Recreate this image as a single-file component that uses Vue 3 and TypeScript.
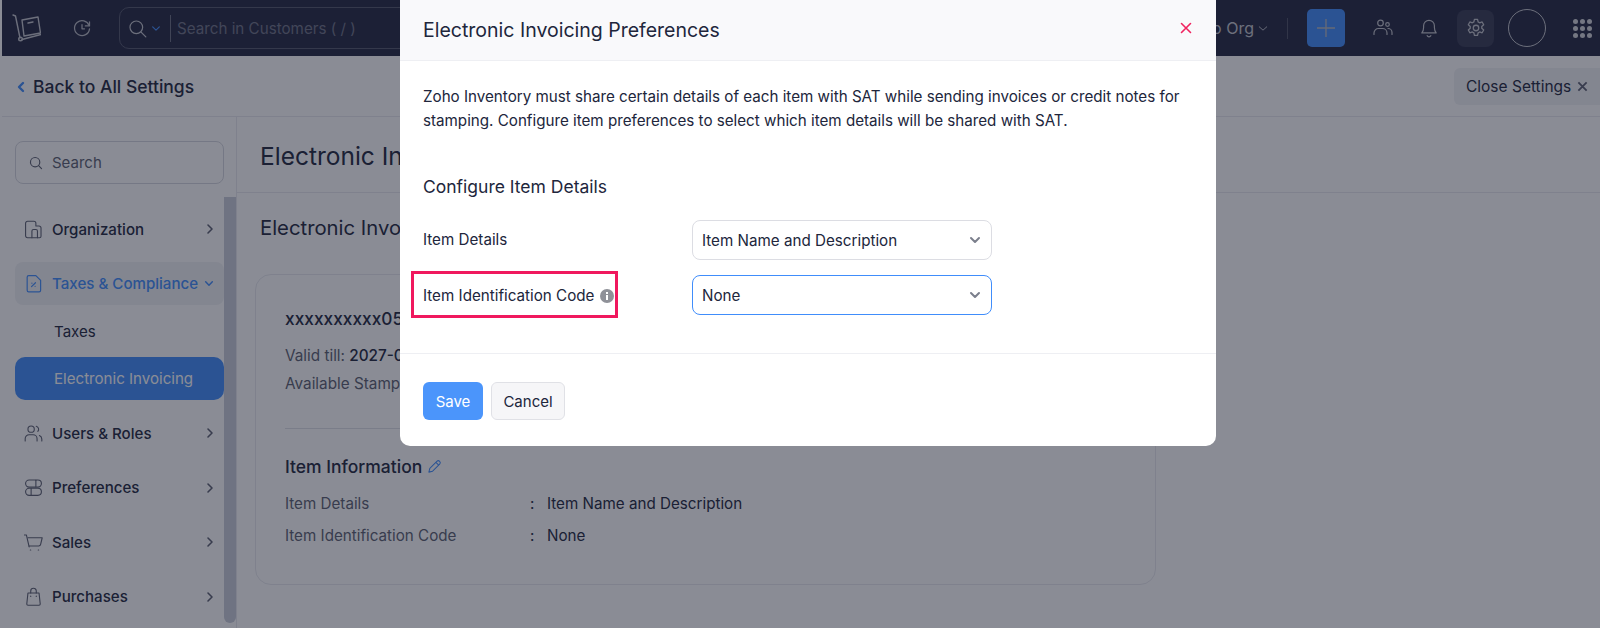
<script setup lang="ts">
const navTop = [{ label: 'Organization', icon: 'org' }]
const navBottom = [
  { label: 'Users & Roles', icon: 'users' },
  { label: 'Preferences', icon: 'prefs' },
  { label: 'Sales', icon: 'sales' },
  { label: 'Purchases', icon: 'bag' },
]
const icons: Record<string, string[]> = {
  org: ['M2 20.500V4a2.500 2.500 0 0 1 2.500-2.500h8A2.500 2.500 0 0 1 15 4v3.500h4A2.500 2.500 0 0 1 21.500 10v10.500a2 2 0 0 1-2 2h-15a2.500 2.500 0 0 1-2.500-2z', 'M10 22.500V14a2 2 0 0 1 2-2h3a2 2 0 0 1 2 2v8.500'],
  users: ['M9 2.500a4 4 0 1 1 0 8 4 4 0 0 1 0-8z', 'M1.500 21.500v-3a5 5 0 0 1 5-5h5a5 5 0 0 1 5 5v3', 'M15.500 2.800a4 4 0 0 1 2 6.500', 'M19.500 14.500a5 5 0 0 1 3 4.500v2.500'],
  prefs: ['M6.500 2.500h11a4.500 4.500 0 0 1 0 9h-11a4.500 4.500 0 0 1 0-9z', 'M15 2.800v8.400', 'M6.500 13h11a4.500 4.500 0 0 1 0 9h-11a4.500 4.500 0 0 1 0-9z', 'M9 13.300v8.400'],
  sales: ['M.5 2.500h2.500l3.500 15', 'M5 6h18l-2 8.500a2.500 2.500 0 0 1-2.500 2H6.500', 'M8 21.500h.5', 'M18 21.500h.5'],
  bag: ['M5 7.500h14l1.500 14a1.500 1.500 0 0 1-1.500 1.500H5a1.500 1.500 0 0 1-1.500-1.500z', 'M8.500 7.500V5a3.500 3.500 0 0 1 7 0v2.500', 'M8.500 11.500v.5', 'M15.500 11.500v.5'],
}
</script>

<template>
  <div class="page">
    <header class="topbar">
      <div class="brand">
        <svg class="logo" viewBox="0 0 30 30" fill="none" stroke="#c3c5cc" stroke-width="1.400" stroke-linejoin="round" stroke-linecap="round">
          <path d="M2 2 4.500 3 9 25" />
          <path d="M11 7 27 4 29.500 20 13 23z" />
          <path d="M11 26.500 30 21.500" />
          <circle cx="9.500" cy="26" r="1.800" />
          <path d="M17 10l5-1" />
        </svg>
      </div>
      <svg class="history" viewBox="0 0 24 24" fill="none" stroke="#b8bac2" stroke-width="1.500" stroke-linecap="round" stroke-linejoin="round">
        <path d="M20.500 9A9 9 0 1 0 21 13" />
        <path d="M21 4.500V9.500h-5" />
        <path d="M12 8v5h3" />
      </svg>
      <div class="global-search">
        <svg class="glass" viewBox="0 0 24 24" fill="none" stroke="#c3c5cc" stroke-width="1.500" stroke-linecap="round">
          <circle cx="10.500" cy="10.500" r="8" />
          <path d="m16.500 16.500 6 6" />
        </svg>
        <svg class="mini-chev" viewBox="0 0 12 8" fill="none" stroke="#408dfb" stroke-width="1.400" stroke-linecap="round" stroke-linejoin="round"><path d="m2 2 4 4 4-4" /></svg>
        <span class="vline"></span>
        <span class="placeholder">Search in Customers ( / )</span>
      </div>
      <div class="spacer"></div>
      <span class="org">Zylker Demo Org</span>
      <svg class="org-chev" viewBox="0 0 12 8" fill="none" stroke="#b8bac2" stroke-width="1.200" stroke-linecap="round" stroke-linejoin="round"><path d="m1.500 2 4.500 4 4.500-4" /></svg>
      <span class="top-div"></span>
      <button class="plus">
        <svg viewBox="0 0 20 20" stroke="#b7b9c0" stroke-width="1.300" fill="none"><path d="M10 1v18M1 10h18" /></svg>
      </button>
      <svg class="top-users" viewBox="0 0 20 20" fill="none" stroke="#c3c5cc" stroke-width="1.200" stroke-linecap="round">
        <circle cx="7.500" cy="5" r="2.800" />
        <circle cx="14.500" cy="6.500" r="1.800" />
        <path d="M1 16.500v-1.500a4.500 4.500 0 0 1 4.500-4.500h4a4.500 4.500 0 0 1 4.500 4.500v1.500" />
        <path d="M15 10.500a4 4 0 0 1 4 4v2" />
      </svg>
      <svg class="bell" viewBox="0 0 20 22" fill="none" stroke="#c3c5cc" stroke-width="1.300" stroke-linejoin="round" stroke-linecap="round">
        <path d="M2 16.500c1.500-1.500 2-3 2-6V8.500a6 6 0 0 1 12 0v2c0 3 .5 4.500 2 6z" />
        <path d="M8 19.500a2.200 2.200 0 0 0 4 0" />
      </svg>
      <div class="gear-box">
        <svg viewBox="0 0 24 24" fill="none" stroke="#c3c5cc" stroke-width="1.400" stroke-linejoin="round">
          <circle cx="12" cy="12" r="3" />
          <path d="M10.300 2.500h3.400l.6 2.800 1.700 1 2.700-.9 1.700 3-2.100 1.900v2l2.100 1.900-1.700 3-2.700-.9-1.700 1-.6 2.800h-3.400l-.6-2.800-1.700-1-2.700.9-1.700-3 2.100-1.900v-2L3.600 8.400l1.700-3 2.700.9 1.700-1z" />
        </svg>
      </div>
      <span class="avatar"></span>
      <div class="apps"><i v-for="n in 9" :key="n"></i></div>
    </header>

    <div class="backbar">
      <a class="back">
        <svg viewBox="0 0 8 12" fill="none" stroke="#408dfb" stroke-width="2.400" stroke-linecap="round" stroke-linejoin="round"><path d="M6 2 2 6l4 4" /></svg>
        Back to All Settings
      </a>
      <button class="close-settings">Close Settings
        <svg viewBox="0 0 12 12" fill="none" stroke="#5b5f70" stroke-width="2"><path d="m1.500 1.500 9 9m0-9-9 9" /></svg>
      </button>
    </div>

    <div class="main">
      <aside class="sidebar">
        <div class="side-search">
          <svg viewBox="0 0 24 24" fill="none" stroke="#5b5f70" stroke-width="2" stroke-linecap="round"><circle cx="10.500" cy="10.500" r="8" /><path d="m16.500 16.500 5 5" /></svg>
          <span>Search</span>
        </div>
        <nav class="nav">
          <div v-for="n in navTop" :key="n.label" class="nav-item">
            <svg class="nav-icon" viewBox="0 0 24 24" fill="none" stroke="#5b5f70" stroke-width="1.400" stroke-linecap="round" stroke-linejoin="round"><path v-for="d in icons[n.icon]" :key="d" :d="d" /></svg>
            <span class="nav-label">{{ n.label }}</span>
            <svg class="nav-chev" viewBox="0 0 8 12" fill="none" stroke="#5b5f70" stroke-width="1.600" stroke-linecap="round" stroke-linejoin="round"><path d="m2 2 4 4-4 4" /></svg>
          </div>
          <div class="nav-item open">
            <svg class="nav-icon" viewBox="0 0 24 24" fill="none" stroke="#408dfb" stroke-width="1.500" stroke-linecap="round" stroke-linejoin="round">
              <path d="M6 2h9l6 6v12.500a2 2 0 0 1-2 2H6a2 2 0 0 1-2-2V4a2 2 0 0 1 2-2z" />
              <path d="m9.500 16 5-5" /><path d="M10 11.500v.1M14 15.500v.1" />
            </svg>
            <span class="nav-label">Taxes &amp; Compliance</span>
            <svg class="open-chev" viewBox="0 0 12 8" fill="none" stroke="#408dfb" stroke-width="1.800" stroke-linecap="round" stroke-linejoin="round"><path d="m2 2 4 4 4-4" /></svg>
          </div>
          <div class="sub">Taxes</div>
          <div class="sub active">Electronic Invoicing</div>
          <div v-for="n in navBottom" :key="n.label" class="nav-item">
            <svg class="nav-icon" viewBox="0 0 24 24" fill="none" stroke="#5b5f70" stroke-width="1.400" stroke-linecap="round" stroke-linejoin="round"><path v-for="d in icons[n.icon]" :key="d" :d="d" /></svg>
            <span class="nav-label">{{ n.label }}</span>
            <svg class="nav-chev" viewBox="0 0 8 12" fill="none" stroke="#5b5f70" stroke-width="1.600" stroke-linecap="round" stroke-linejoin="round"><path d="m2 2 4 4-4 4" /></svg>
          </div>
        </nav>
        <div class="scrollbar"></div>
      </aside>
      <section class="content">
        <h1 class="title">Electronic Invoicing</h1>
        <div class="inner">
          <h2 class="subtitle">Electronic Invoicing</h2>
          <div class="card">
            <div class="rfc">xxxxxxxxxx05</div>
            <div class="meta">Valid till: <b>2027-01-01</b></div>
            <div class="meta">Available Stamps</div>
            <hr class="card-div" />
            <div class="info-head">Item Information
              <svg viewBox="0 0 16 16" fill="none" stroke="#408dfb" stroke-width="1.100" stroke-linejoin="round"><path d="M10.500 2.500a2 2 0 0 1 3 3L6 13l-4 1 1-4z" /><path d="m9.500 3.500 3 3" /></svg>
            </div>
            <div class="info-row"><span class="k">Item Details</span><span class="c">:</span><span class="v">Item Name and Description</span></div>
            <div class="info-row"><span class="k">Item Identification Code</span><span class="c">:</span><span class="v">None</span></div>
          </div>
        </div>
      </section>
    </div>

    <div class="overlay"></div>
    <div class="modal">
      <div class="m-head">
        <span>Electronic Invoicing Preferences</span>
        <svg viewBox="0 0 12 12" fill="none" stroke="#f0235f" stroke-width="1.600" stroke-linecap="round"><path d="m1.500 1.500 9 9m0-9-9 9" /></svg>
      </div>
      <div class="m-body">
        <p class="m-text">Zoho Inventory must share certain details of each item with SAT while sending invoices or credit notes for stamping. Configure item preferences to select which item details will be shared with SAT.</p>
        <h3 class="m-sub">Configure Item Details</h3>
        <div class="field">
          <label class="plain">Item Details</label>
          <div class="select">Item Name and Description
            <svg viewBox="0 0 12 8" fill="none" stroke="#7b7f8c" stroke-width="2" stroke-linecap="round" stroke-linejoin="round"><path d="m2 2 4 4 4-4" /></svg>
          </div>
        </div>
        <div class="field second">
          <label class="marked">Item Identification Code
            <svg class="info" viewBox="0 0 14 14"><circle cx="7" cy="7" r="7" fill="#8f9198" /><rect x="6" y="6" width="2" height="5" fill="#fff" /><rect x="6" y="3" width="2" height="2" fill="#fff" /></svg>
          </label>
          <div class="select focus">None
            <svg viewBox="0 0 12 8" fill="none" stroke="#7b7f8c" stroke-width="2" stroke-linecap="round" stroke-linejoin="round"><path d="m2 2 4 4 4-4" /></svg>
          </div>
        </div>
      </div>
      <div class="m-foot">
        <button class="save">Save</button>
        <button class="cancel">Cancel</button>
      </div>
    </div>
  </div>
</template>

<style>
html, body { margin: 0; background: #fff; overflow: hidden; }
</style>

<style scoped>
.page { position: relative; width: 1600px; height: 628px; overflow: hidden; padding-left: 2px; box-sizing: border-box; font-family: Inter, "Liberation Sans", sans-serif; color: #21263c; background: #fff; }
.topbar { height: 56px; background: #232741; display: flex; align-items: center; }
.brand { width: 48px; display: flex; justify-content: center; flex: none; }
.logo { width: 30px; height: 30px; }
.history { width: 20px; height: 20px; margin-left: 22px; flex: none; }
.global-search { margin-left: 27px; width: 320px; height: 42px; border: 1px solid #52566b; border-radius: 10px; display: flex; align-items: center; padding-left: 8px; box-sizing: border-box; flex: none; }
.glass { width: 19px; height: 19px; flex: none; }
.mini-chev { width: 10px; height: 7px; margin-left: 4px; flex: none; }
.vline { width: 1px; height: 27px; background: #6a6e80; margin-left: 9px; }
.placeholder { margin-left: 6px; font-size: 15.200px; color: #6e7285; white-space: nowrap; }
.spacer { flex: 1; }
.org { font-size: 16px; color: #c3c5cc; white-space: nowrap; }
.org-chev { width: 10px; height: 7px; margin-left: 4px; flex: none; }
.top-div { width: 1px; height: 21px; background: #4c5064; margin-left: 19px; }
.plus { width: 38px; height: 38px; margin-left: 19px; background: #408dfb; border: 0; border-radius: 5px; padding: 0; display: flex; align-items: center; justify-content: center; flex: none; }
.plus svg { width: 20px; height: 20px; }
.top-users { width: 20px; height: 20px; margin-left: 28px; flex: none; }
.bell { width: 18px; height: 20px; margin-left: 27px; flex: none; }
.gear-box { width: 37px; height: 37px; margin-left: 19px; border-radius: 8px; background: #363a53; display: flex; align-items: center; justify-content: center; flex: none; }
.gear-box svg { width: 22px; height: 22px; }
.avatar { width: 36px; height: 36px; margin-left: 14px; border: 1.500px solid #c3c5cc; border-radius: 50%; flex: none; }
.apps { width: 19px; height: 19px; margin-left: 27px; margin-right: 8px; display: grid; grid-template-columns: repeat(3, 5px); gap: 2px; flex: none; }
.apps i { width: 5px; height: 5px; border-radius: 50%; background: #d3d4d9; }
.backbar { height: 61px; box-sizing: border-box; border-bottom: 1px solid #e8e9ee; display: flex; align-items: center; justify-content: space-between; background: #fff; }
.back { display: flex; align-items: center; gap: 8px; margin: 1px 0 0 15px; font-size: 17.500px; font-weight: 500; }
.back svg { width: 8px; height: 12px; }
.close-settings { height: 37px; width: 146px; border: 0; border-radius: 6px 0 0 6px; background: #f1f2f5; display: flex; align-items: center; gap: 6px; padding: 0 0 0 12px; font: 400 15.500px Inter, sans-serif; color: #21263c; }
.close-settings svg { width: 11px; height: 11px; }
.main { display: flex; height: 511px; }
.sidebar { position: relative; width: 234px; flex: none; border-right: 1px solid #e8e9ee; }
.side-search { margin: 24px 0 0 13px; width: 209px; height: 43px; border: 1px solid #d5d7de; border-radius: 8px; display: flex; align-items: center; gap: 9px; padding-left: 13px; box-sizing: border-box; font-size: 15px; color: #5b5f70; }
.side-search svg { width: 14px; height: 14px; }
.nav { margin-top: 23.500px; margin-left: 13px; width: 209px; display: flex; flex-direction: column; }
.nav-item { height: 43px; flex: none; display: flex; align-items: center; padding-left: 9px; margin-bottom: 11.500px; font-size: 15.100px; font-weight: 500; border-radius: 8px; }
.nav-icon { width: 19px; height: 19px; flex: none; }
.nav-label { margin-left: 9px; flex: 1; white-space: nowrap; }
.nav-chev { width: 8px; height: 12px; margin-right: 10px; flex: none; }
.open { background: #f1f2f5; color: #408dfb; margin-bottom: 5px; }
.open-chev { width: 10px; height: 7px; margin-right: 10px; flex: none; }
.sub { height: 43px; flex: none; display: flex; align-items: center; padding-left: 39px; font-size: 15.100px; }
.sub.active { background: #408dfb; color: #fff; border-radius: 10px; margin-top: 4px; margin-bottom: 11.500px; }
.scrollbar { position: absolute; right: 0; top: 80px; width: 12px; height: 426px; border-radius: 0 0 6px 6px; background: #c8ccd9; }
.content { flex: 1; min-width: 0; }
.title { margin: 0; height: 76px; box-sizing: border-box; padding: 19.500px 0 0 23px; border-bottom: 1px solid #e8e9ee; font-size: 24.500px; font-weight: 400; line-height: 38px; white-space: nowrap; }
.inner { padding: 20px 0 0 23px; }
.subtitle { margin: 0; font-size: 20.300px; font-weight: 400; line-height: 30px; }
.card { margin-top: 31px; margin-left: -5px; width: 901px; height: 311px; box-sizing: border-box; border: 1px solid #e8e9ee; border-radius: 16px; padding: 31px 0 0 29px; }
.rfc { font-size: 17.300px; font-weight: 500; line-height: 26px; }
.meta { font-size: 15.300px; line-height: 28.500px; color: #5b5f70; }
.rfc + .meta { margin-top: 9.500px; }
.meta b { font-weight: 500; color: #21263c; }
.card-div { margin: 29px 0 0; width: 820px; border: 0; border-top: 1px solid #dfe0e6; }
.info-head { display: flex; align-items: center; gap: 5px; margin-top: 25px; font-size: 17.500px; font-weight: 500; line-height: 26px; }
.info-head svg { width: 15px; height: 15px; }
.info-row { display: flex; font-size: 15.200px; line-height: 32.500px; }
.info-head + .info-row { margin-top: 8px; }
.k { width: 245px; color: #5b5f70; }
.c { width: 17px; }
.v { color: #21263c; }
.overlay { position: absolute; inset: 0; background: rgba(21, 25, 43, 0.5); }
.modal { position: absolute; left: 400px; top: 0; width: 816px; height: 446px; background: #fff; border-radius: 0 0 10px 10px; display: flex; flex-direction: column; overflow: hidden; }
.m-head { height: 61px; flex: none; box-sizing: border-box; background: #f9f9fb; border-bottom: 1px solid #eeeff3; display: flex; align-items: center; justify-content: space-between; padding: 0 24px 0 23px; font-size: 19.500px; }
.m-head svg { width: 12px; height: 12px; margin-top: -5px; }
.m-body { height: 292px; flex: none; box-sizing: border-box; padding: 24px 0 0 23px; position: relative; }
.m-text { margin: 0; width: 770px; font-size: 15.180px; line-height: 24px; }
.m-sub { margin: 42px 0 0; font-size: 17.500px; font-weight: 400; line-height: 24px; }
.field { display: flex; align-items: center; margin-top: 21px; font-size: 15.200px; }
.field.second { margin-top: 15px; }
.field label { width: 269px; flex: none; white-space: nowrap; }
.plain { padding-bottom: 2px; }
.select { width: 300px; height: 40px; box-sizing: border-box; border: 1px solid #dcdde3; border-radius: 8px; padding: 0 10px 0 9px; display: flex; align-items: center; justify-content: space-between; }
.select svg { width: 12px; height: 8px; }
.select.focus { border-color: #408dfb; }
.marked { position: relative; }
.marked::before { content: ""; position: absolute; left: -12px; top: -15px; width: 201px; height: 41px; border: 3px solid #f0185e; }
.info { width: 14px; height: 14px; margin-left: 1px; vertical-align: -2px; }
.m-foot { flex: 1; border-top: 1px solid #eeeff3; display: flex; align-items: flex-start; gap: 8px; padding: 28px 0 0 23px; }
.m-foot button { height: 38px; border-radius: 6px; font: 400 15px Inter, sans-serif; padding: 0; }
.save { width: 60px; border: 0; background: #4b95fb; color: #fff; }
.cancel { width: 74px; border: 1px solid #e0e1e6; background: #f6f6f8; color: #21263c; }
</style>
